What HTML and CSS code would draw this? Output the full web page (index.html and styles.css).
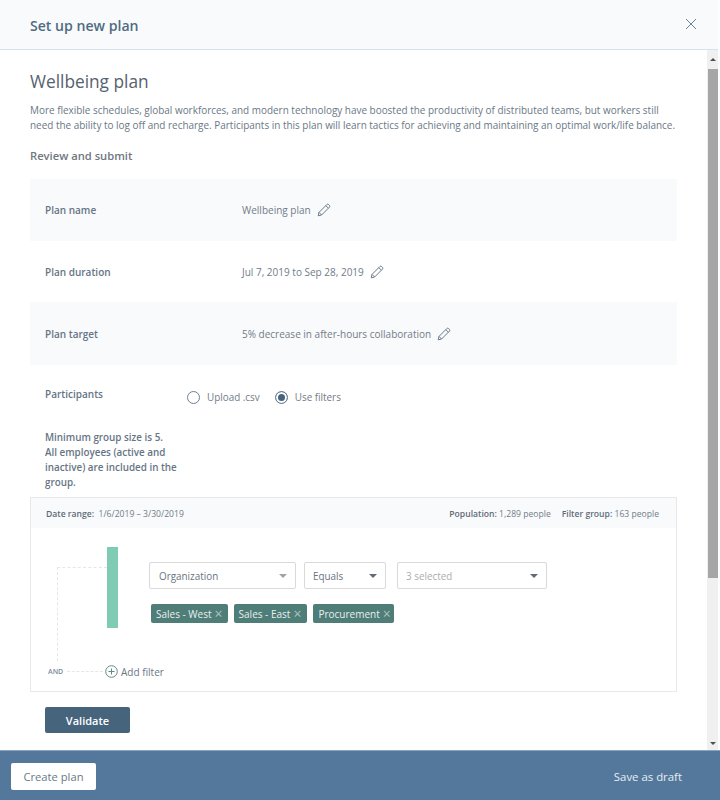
FILE: index.html
```html
<!DOCTYPE html>
<html lang="en">
<head>
<meta charset="UTF-8">
<meta name="viewport" content="width=device-width, initial-scale=1.0">
<title>Set up new plan</title>
<link rel="stylesheet" href="styles.css">
</head>
<body>
    <header class="top-bar">
        <h1>Set up new plan</h1>
        <svg class="close-icon" width="12" height="12" viewBox="0 0 12 12"><path d="M1 1l10 10M11 1L1 11" fill="none" stroke="#6d8093" stroke-width="1"/></svg>
    </header>

    <div class="middle">
        <main class="content">
            <h2>Wellbeing plan</h2>
            <p class="intro">More flexible schedules, global workforces, and modern technology have boosted the productivity of distributed teams, but workers still need the ability to log off and recharge. Participants in this plan will learn tactics for achieving and maintaining an optimal work/life balance.</p>
            <h3>Review and submit</h3>

            <div class="row row-name shaded">
                <span class="row-label">Plan name</span>
                <span class="row-value">Wellbeing plan</span>
                <svg class="pencil" width="14" height="14" viewBox="0 0 14 14"><path d="M1.2 12.8l.8-3.4L9.8 1.6a1.3 1.3 0 0 1 1.9 0l.7.7a1.3 1.3 0 0 1 0 1.9L4.6 12zM2 9.4L4.6 12M8.8 2.6l2.6 2.6" fill="none" stroke="#6a7a89" stroke-width="1"/></svg>
            </div>
            <div class="row row-duration">
                <span class="row-label">Plan duration</span>
                <span class="row-value">Jul 7, 2019 to Sep 28, 2019</span>
                <svg class="pencil" width="14" height="14" viewBox="0 0 14 14"><path d="M1.2 12.8l.8-3.4L9.8 1.6a1.3 1.3 0 0 1 1.9 0l.7.7a1.3 1.3 0 0 1 0 1.9L4.6 12zM2 9.4L4.6 12M8.8 2.6l2.6 2.6" fill="none" stroke="#6a7a89" stroke-width="1"/></svg>
            </div>
            <div class="row row-target shaded">
                <span class="row-label">Plan target</span>
                <span class="row-value">5% decrease in after-hours collaboration</span>
                <svg class="pencil" width="14" height="14" viewBox="0 0 14 14"><path d="M1.2 12.8l.8-3.4L9.8 1.6a1.3 1.3 0 0 1 1.9 0l.7.7a1.3 1.3 0 0 1 0 1.9L4.6 12zM2 9.4L4.6 12M8.8 2.6l2.6 2.6" fill="none" stroke="#6a7a89" stroke-width="1"/></svg>
            </div>

            <div class="participants">
                <span class="row-label">Participants</span>
                <div class="radios">
                    <span class="radio"></span><span class="radio-text">Upload .csv</span>
                    <span class="radio checked"></span><span class="radio-text">Use filters</span>
                </div>
            </div>
            <p class="note">Minimum group size is 5.<br>All employees (active and inactive) are included in the group.</p>

            <section class="filter-card">
                <div class="filter-head">
                    <span><b>Date range:</b>&nbsp; 1/6/2019 – 3/30/2019</span>
                    <span class="counts"><span><b>Population:</b> 1,289 people</span><span><b>Filter group:</b> 163 people</span></span>
                </div>
                <div class="filter-body">
                    <div class="line-top"></div>
                    <div class="line-side"></div>
                    <div class="line-and"></div>
                    <div class="filter-main">
                        <div class="green-bar"></div>
                        <div class="filter-fields">
                            <div class="selects">
                                <div class="select select-org"><span>Organization</span><i class="caret caret-light"></i></div>
                                <div class="select select-equals"><span>Equals</span><i class="caret"></i></div>
                                <div class="select select-chosen"><span>3 selected</span><i class="caret"></i></div>
                            </div>
                            <div class="chips">
                                <span class="chip">Sales - West<em>×</em></span>
                                <span class="chip">Sales - East<em>×</em></span>
                                <span class="chip">Procurement<em>×</em></span>
                            </div>
                        </div>
                    </div>
                    <div class="add-row">
                        <span class="and">AND</span>
                        <svg class="add-icon" width="13" height="13" viewBox="0 0 13 13"><circle cx="6.5" cy="6.5" r="5.8" fill="none" stroke="#5f8a85"/><path d="M6.5 3.5v6M3.5 6.5h6" stroke="#5f8a85"/></svg>
                        <span class="add-text">Add filter</span>
                    </div>
                </div>
            </section>

            <button class="validate">Validate</button>
        </main>

        <div class="scrollbar">
            <div class="arrow arrow-up"></div>
            <div class="track"><div class="thumb"></div></div>
            <div class="arrow arrow-down"></div>
        </div>
    </div>

    <footer class="bottom-bar">
        <button class="create">Create plan</button>
        <span class="draft">Save as draft</span>
    </footer>
</body>
</html>
```

FILE: styles.css
```css
* {
    box-sizing: border-box;
}
html, body {
    height: 100%;
}
body {
    font-family: "Open Sans", "Noto Sans", sans-serif;
    background-color: #ffffff;
    color: #5a6b7b;
    margin: 0;
    overflow: hidden;
    display: flex;
    flex-direction: column;
    width: 720px;
    height: 800px;
}
.top-bar {
    width: 718px;
    height: 50px;
    flex: none;
    display: flex;
    align-items: center;
    justify-content: space-between;
    padding: 0 21px 2px 30px;
    background-color: #f9fafc;
    border-bottom: 1px solid #d5e3ee;
}
h1 {
    margin: 3px 0 0;
    font-size: 14.1px;
    font-weight: 600;
    color: #4f6b81;
}
.middle {
    flex: 1;
    display: flex;
    min-height: 0;
}
.content {
    width: 707px;
    padding: 20px 30px 0;
    overflow: hidden;
}
h2 {
    margin: 0;
    font-size: 17.3px;
    font-weight: 400;
    line-height: 24px;
    color: #55626f;
}
.intro {
    margin: 9px 0 0;
    font-size: 9.95px;
    line-height: 15px;
    color: #6a7886;
}
h3 {
    margin: 15px 0 0;
    font-size: 11.2px;
    font-weight: 600;
    line-height: 15px;
    color: #6f777f;
}
.row {
    display: flex;
    align-items: center;
    padding-left: 15px;
    font-size: 10px;
}
.row-name {
    margin-top: 16px;
    height: 62px;
}
.row-duration {
    height: 61px;
}
.row-target {
    height: 63px;
}
.shaded {
    background-color: #f9fafc;
}
.row-label {
    width: 197px;
    flex: none;
    font-size: 10px;
    font-weight: 600;
    color: #667584;
}
.row-value {
    color: #717c87;
}
.pencil {
    margin-left: 6px;
}
.participants {
    display: flex;
    padding-left: 15px;
    height: 65px;
    padding-top: 22px;
}
.participants .row-label {
    width: 142px;
}
.radios {
    display: flex;
    align-items: center;
    height: 14px;
    margin-top: 3px;
    font-size: 9.9px;
    color: #717c87;
}
.radio {
    width: 13px;
    height: 13px;
    border: 1px solid #6d8093;
    border-radius: 50%;
    background-color: #ffffff;
}
.radio.checked {
    background-color: #46647c;
    box-shadow: inset 0 0 0 2px #ffffff;
}
.radio-text {
    margin: 0 15px 0 7px;
}
.note {
    margin: 0 0 0 15px;
    width: 142px;
    font-size: 9.85px;
    font-weight: 600;
    line-height: 15px;
    color: #667584;
}
.filter-card {
    margin-top: 7px;
    height: 195px;
    border: 1px solid #e8e8e8;
}
.filter-head {
    height: 30px;
    background-color: #f9fafc;
    display: flex;
    align-items: center;
    justify-content: space-between;
    padding: 1px 17px 0 15px;
    font-size: 8.6px;
    color: #717c87;
}
.filter-head b {
    font-weight: 600;
    color: #5f6b77;
}
.counts {
    display: flex;
    gap: 11px;
}
.filter-body {
    position: relative;
    height: 163px;
}
.line-top {
    position: absolute;
    left: 26px;
    top: 39px;
    width: 50px;
    border-top: 1px dashed #e6e6e6;
}
.line-side {
    position: absolute;
    left: 26px;
    top: 39px;
    height: 94px;
    border-left: 1px dashed #e6e6e6;
}
.line-and {
    position: absolute;
    left: 36px;
    top: 143px;
    width: 36px;
    border-top: 1px dashed #e6e6e6;
}
.filter-main {
    display: flex;
    padding: 19px 0 0 76px;
}
.green-bar {
    width: 11px;
    height: 81px;
    background-color: #80cbb3;
}
.filter-fields {
    margin: 15px 0 0 31px;
}
.selects {
    display: flex;
}
.select {
    height: 27px;
    display: flex;
    align-items: center;
    justify-content: space-between;
    border: 1px solid #d9d9d9;
    border-radius: 2px;
    font-size: 9.9px;
    color: #6a747e;
}
.select-org {
    width: 147px;
    padding: 0 8px 0 9px;
    margin-right: 8px;
}
.select-equals {
    width: 82px;
    padding: 0 8px 0 8px;
    margin-right: 11px;
}
.select-chosen {
    width: 150px;
    padding: 0 8px 0 8px;
}
.select-chosen span {
    color: #adadad;
}
.caret {
    width: 0;
    height: 0;
    border-left: 4px solid transparent;
    border-right: 4px solid transparent;
    border-top: 4px solid #5f6b76;
}
.caret-light {
    border-top-color: #a3a3a3;
}
.chips {
    display: flex;
    gap: 6px;
    margin: 15px 0 0 2px;
}
.chip {
    height: 19px;
    padding: 0 5px;
    display: flex;
    align-items: center;
    background-color: #4f7d78;
    border-radius: 2px;
    color: #e8f0ef;
    font-size: 10px;
    white-space: pre;
}
.chip:nth-child(2) {
    padding-right: 6px;
}
.chip:nth-child(3) {
    padding-right: 3px;
}
.chip em {
    margin-left: 3px;
    font-style: normal;
    font-size: 14px;
    line-height: 12px;
    color: #a9c3c0;
}
.add-row {
    position: absolute;
    left: 17px;
    top: 137px;
    display: flex;
    align-items: center;
    height: 13px;
}
.and {
    width: 57px;
    font-size: 7px;
    font-weight: 600;
    color: #7b8c9c;
}
.add-text {
    margin-left: 3px;
    font-size: 10px;
    color: #6a7886;
}
.validate {
    display: block;
    margin: 15px 0 0 15px;
    width: 85px;
    height: 26px;
    border: none;
    border-radius: 2px;
    background-color: #46647c;
    color: #ffffff;
    font-family: inherit;
    font-size: 11px;
    font-weight: 600;
}
.scrollbar {
    width: 11px;
    margin-right: 2px;
    background-color: #f0f0f0;
    display: flex;
    flex-direction: column;
}
.arrow {
    height: 19px;
    flex: none;
    display: flex;
    align-items: center;
    justify-content: center;
}
.arrow-up::before {
    content: "";
    border-left: 3px solid transparent;
    border-right: 3px solid transparent;
    border-bottom: 3px solid #505050;
}
.arrow-down {
    height: 13px;
}
.arrow-down::before {
    content: "";
    border-left: 3px solid transparent;
    border-right: 3px solid transparent;
    border-top: 3px solid #505050;
}
.track {
    flex: 1;
}
.thumb {
    height: 509px;
    margin-left: 1px;
    background-color: #a6a6a6;
}
.bottom-bar {
    height: 50px;
    flex: none;
    display: flex;
    align-items: center;
    justify-content: space-between;
    padding: 0 38px 0 11px;
    background-color: #54789c;
    border-top: 1px solid #8ba5be;
}
.create {
    width: 85px;
    height: 27px;
    margin-top: 1px;
    border: none;
    border-radius: 2px;
    background-color: #ffffff;
    color: #6a7886;
    font-family: inherit;
    font-size: 11.2px;
}
.draft {
    font-size: 11.4px;
    color: #e6edf3;
    margin-top: 1px;
}
```
